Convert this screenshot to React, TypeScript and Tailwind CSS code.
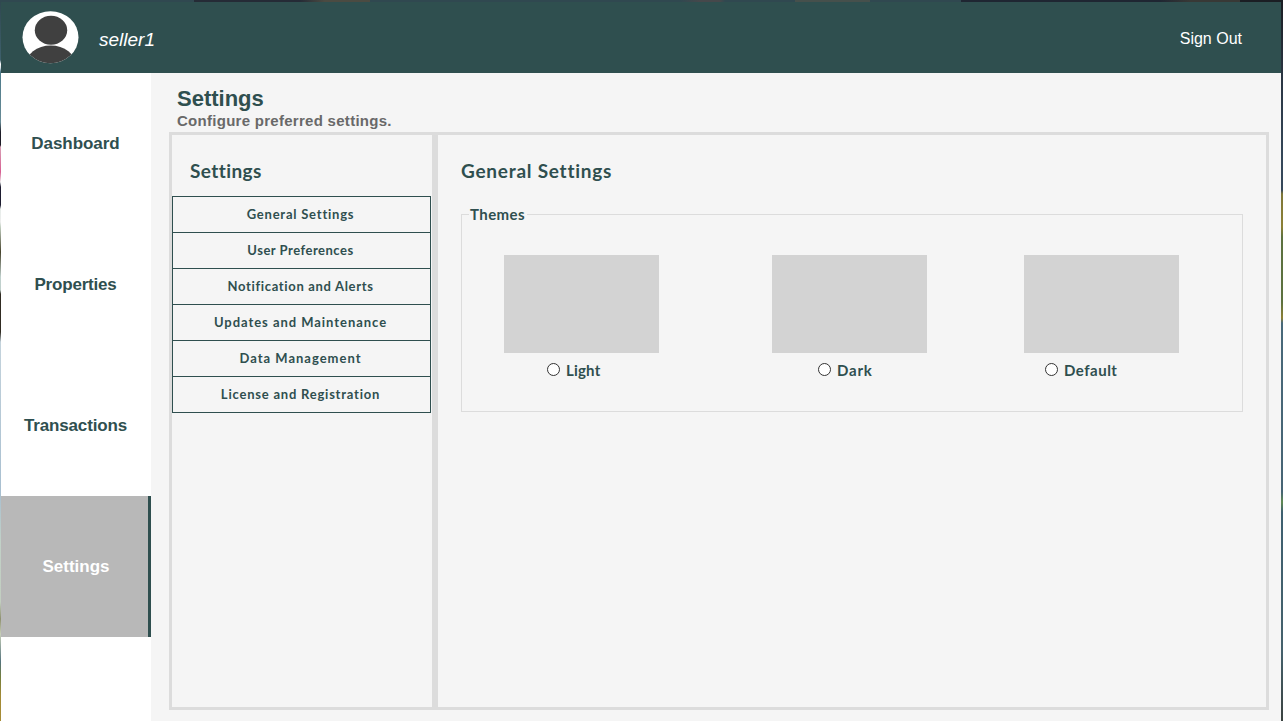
const NAV = [
  { label: "Dashboard", tracking: "tracking-[-0.05px]" },
  { label: "Properties", tracking: "tracking-[-0.2px]" },
  { label: "Transactions", tracking: "tracking-[-0.15px]" },
  { label: "Settings", tracking: "tracking-normal", active: true },
];

const SECTIONS = [
  { label: "General Settings", tracking: "tracking-[0.78px]" },
  { label: "User Preferences", tracking: "tracking-[0.5px]" },
  { label: "Notification and Alerts", tracking: "tracking-[0.67px]" },
  { label: "Updates and Maintenance", tracking: "tracking-[0.96px]" },
  { label: "Data Management", tracking: "tracking-[1px]" },
  { label: "License and Registration", tracking: "tracking-[0.78px]" },
];

const THEMES = [
  { label: "Light", offset: "pl-[43px]", gap: "mr-[113px]", tracking: "tracking-[0.2px]" },
  { label: "Dark", offset: "pl-[46px]", gap: "mr-[97px]", tracking: "tracking-[0.8px]" },
  { label: "Default", offset: "pl-[21px]", gap: "mr-0", tracking: "tracking-[0.5px]" },
];

function Avatar() {
  return (
    <svg width="57" height="53" viewBox="0 0 57 53" className="ml-[21px]">
      <defs>
        <clipPath id="avatar-clip">
          <ellipse cx="28.5" cy="26.2" rx="28" ry="26" />
        </clipPath>
      </defs>
      <ellipse cx="28.5" cy="26.2" rx="28" ry="26" fill="#fff" />
      <g clipPath="url(#avatar-clip)" fill="#404040">
        <ellipse cx="29" cy="19.3" rx="16.2" ry="14.5" />
        <ellipse cx="28.7" cy="54" rx="25" ry="19.5" />
      </g>
    </svg>
  );
}

function Header() {
  return (
    <header className="flex h-[71px] shrink-0 items-start bg-[#2f4f4f] pt-[9px] text-white">
      <Avatar />
      <span className="ml-[20px] mt-[18px] text-[19px] leading-[22px] italic">seller1</span>
      <span className="mr-[39px] mt-[18px] ml-auto text-[16px] leading-[20px]">Sign Out</span>
    </header>
  );
}

function Sidebar() {
  return (
    <nav className="w-[150px] shrink-0 bg-white text-[17px] font-bold text-[#2f4f4f]">
      {NAV.map((item) => (
        <div
          key={item.label}
          className={`flex h-[141px] items-center justify-center ${item.tracking} ${
            item.active ? "border-r-[3px] border-[#2f4f4f] bg-[#b8b8b8] pl-[3px] text-white" : "pr-[1px]"
          }`}
        >
          {item.label}
        </div>
      ))}
    </nav>
  );
}

function SectionList() {
  return (
    <div className="w-[260px] shrink-0">
      <h2 className="ml-[18px] pt-[23px] text-[19px] leading-[26px] tracking-[0.4px]">Settings</h2>
      <ul className="mt-[12px] mr-[1px] border border-[#2f4f4f]">
        {SECTIONS.map((s) => (
          <li
            key={s.label}
            className={`flex h-[36px] items-center justify-center border-b border-[#2f4f4f] pt-[1px] pr-[2px] text-[13px] last:h-[35px] last:border-b-0 ${s.tracking}`}
          >
            {s.label}
          </li>
        ))}
      </ul>
    </div>
  );
}

function GeneralSettings() {
  return (
    <div className="flex-1 pl-[23px] pr-[23px]">
      <h2 className="pt-[23px] text-[19px] leading-[26px] tracking-[0.75px]">General Settings</h2>
      <fieldset className="mt-[20px] h-[208px] border border-[#dcdcdc] pl-[42px]">
        <legend className="-ml-[35px] pr-[2px] pl-[1px] text-[15px] leading-[20px] tracking-[0.42px]">Themes</legend>
        <div className="flex pt-[31px]">
          {THEMES.map((t) => (
            <div key={t.label} className={`w-[155px] shrink-0 ${t.gap}`}>
              <div className="h-[98px] bg-[#d3d3d3]" />
              <label className={`flex items-center pt-[7px] ${t.offset}`}>
                <span className="mb-[2px] mr-[6px] size-[13px] rounded-full border border-[#333] bg-white" />
                <span className={`text-[15px] leading-[20px] ${t.tracking}`}>{t.label}</span>
              </label>
            </div>
          ))}
        </div>
      </fieldset>
    </div>
  );
}

export default function App() {
  return (
    <div className="flex h-[721px] w-[1283px] flex-col overflow-hidden font-['Liberation_Sans',sans-serif]">
      <div className="h-[2px] shrink-0 bg-[linear-gradient(90deg,#304850_0_194px,#252b36_194px_300px,#4b4b42_325px_370px,#304850_370px_680px,#46484b_700px_720px,#304850_725px_795px,#46504c_795px_870px,#304850_870px_961px,#1f2632_961px_1160px,#383936_1190px_1240px,#1b1e24_1240px)]" />
      <div className="flex min-h-0 flex-1">
        <div className="w-[1px] shrink-0 bg-[linear-gradient(180deg,#304850_0px,#3e606c_58px,#fff_62px,#d0dde5_66px,#4d7a8a_70px,#688b96_120px,#1d1c27_130px,#1d1c27_143px,#d8a1b5_145px,#d75d91_170px,#eee_180px,#1d1c30_185px,#1d1c30_203px,#e6ece9_207px,#eee_220px,#c3d0c2_225px,#46432c_250px,#c1d1ce_275px,#bfcfcb_288px,#302b22_292px,#302b22_330px,#c4d3dc_340px,#a8bfd0_490px,#c1d1c7_540px,#c2cec0_600px,#8f9170_617px,#c7cfb9_632px,#54737c_660px,#737e3d_675px,#a28a35_694px,#a78c36_719px)]" />
        <div className="flex min-w-0 flex-1 flex-col">
          <Header />
          <div className="flex min-h-0 flex-1">
            <Sidebar />
            <main className="flex min-w-0 flex-1 flex-col bg-[#f5f5f5] pr-[12px] pb-[11px] pl-[18px] text-[#2f4f4f]">
              <div className="h-[59px] shrink-0 pt-[13px] pl-[8px] font-bold">
                <h1 className="text-[22px] leading-[26px]">Settings</h1>
                <p className="text-[15px] leading-[18px] tracking-[0.28px] text-[#696969]">Configure preferred settings.</p>
              </div>
              <section className="flex min-h-0 flex-1 border-[3px] border-[#dcdcdc] font-['Lato',sans-serif] font-bold">
                <SectionList />
                <div className="w-[6px] shrink-0 bg-[#dcdcdc]" />
                <GeneralSettings />
              </section>
            </main>
          </div>
        </div>
        <div className="w-[2px] shrink-0 bg-[linear-gradient(180deg,#1b1e24_0px,#293441_70px,#35485a_160px,#35485a_188px,#7e7739_192px,#8c8035_225px,#5c713f_235px,#5c713f_300px,#8c8035_316px,#48697a_321px,#466474_490px,#608a52_500px,#3e6070_510px,#45616c_650px,#3a4240_719px)]" />
      </div>
    </div>
  );
}
